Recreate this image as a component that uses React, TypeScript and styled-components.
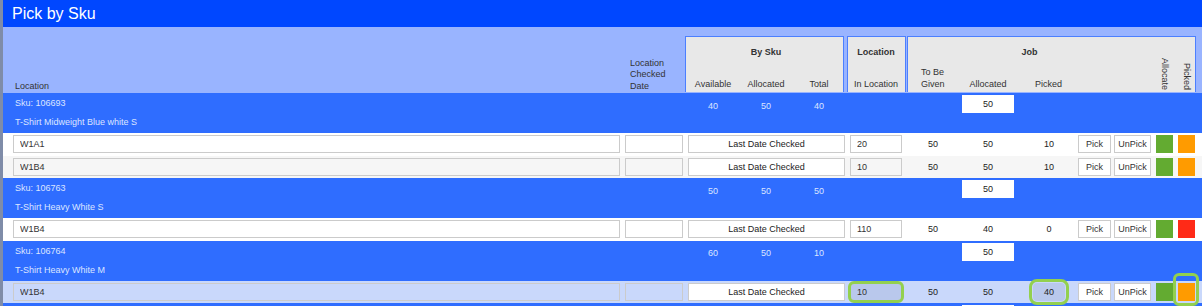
import React from 'react';
import styled, { createGlobalStyle, css } from 'styled-components';

const GlobalStyle = createGlobalStyle`
  html, body {
    margin: 0;
    padding: 0;
    background: #ffffff;
    overflow: hidden;
  }
  body {
    font-family: "Liberation Sans", Arial, Helvetica, sans-serif;
    font-size: 9px;
    color: #333333;
  }
`;

const COLUMNS = '619px 64px 54px 52px 54px 60px 54px 56px 60px 36px 41px 22px 22px 1fr';

type Status = 'green' | 'orange' | 'red';

interface PickRow {
  location: string;
  inLocation: number;
  toBeGiven: number;
  allocated: number;
  picked: number;
  allocate: Status;
  pickedStatus: Status;
  selected?: boolean;
}

interface SkuGroup {
  sku: string;
  name: string;
  available: number;
  allocated: number;
  total: number;
  jobAllocated: number;
  rows: PickRow[];
}

const skus: SkuGroup[] = [
  {
    sku: '106693',
    name: 'T-Shirt Midweight Blue white S',
    available: 40,
    allocated: 50,
    total: 40,
    jobAllocated: 50,
    rows: [
      { location: 'W1A1', inLocation: 20, toBeGiven: 50, allocated: 50, picked: 10, allocate: 'green', pickedStatus: 'orange' },
      { location: 'W1B4', inLocation: 10, toBeGiven: 50, allocated: 50, picked: 10, allocate: 'green', pickedStatus: 'orange' }
    ]
  },
  {
    sku: '106763',
    name: 'T-Shirt Heavy White S',
    available: 50,
    allocated: 50,
    total: 50,
    jobAllocated: 50,
    rows: [
      { location: 'W1B4', inLocation: 110, toBeGiven: 50, allocated: 40, picked: 0, allocate: 'green', pickedStatus: 'red' }
    ]
  },
  {
    sku: '106764',
    name: 'T-Shirt Heavy White M',
    available: 60,
    allocated: 50,
    total: 10,
    jobAllocated: 50,
    rows: [
      { location: 'W1B4', inLocation: 10, toBeGiven: 50, allocated: 50, picked: 40, allocate: 'green', pickedStatus: 'orange', selected: true }
    ]
  }
];

const statusColors: Record<Status, string> = {
  green: '#63ab31',
  orange: '#ff9b00',
  red: '#ff2a17'
};

const Frame = styled.div`
  border-left: 3px solid #7f8ca8;
  height: 306px;
  overflow: hidden;
`;

const TitleBar = styled.div`
  height: 27px;
  background: #0047ff;
  color: #ffffff;
  font-size: 16px;
  line-height: 28px;
  padding-left: 9px;
`;

const Header = styled.div`
  display: grid;
  grid-template-columns: ${COLUMNS};
  grid-template-rows: 9px 30px 26px 1px;
  background: #99b4ff;
`;

const HeadLabel = styled.div<{ $col: string; $left?: number }>`
  grid-column: ${p => p.$col};
  grid-row: 1 / 4;
  align-self: end;
  padding-left: ${p => p.$left ?? 0}px;
  padding-bottom: 0;
  line-height: 11.5px;
  color: #333333;
`;

const GroupBox = styled.div<{ $col: string; $ml: number; $mr: number }>`
  grid-column: ${p => p.$col};
  grid-row: 2 / 4;
  margin-left: ${p => p.$ml}px;
  margin-right: ${p => p.$mr}px;
  background: #e8e8e8;
  border: 1px solid #4c7fff;
  border-bottom: none;
`;

const GroupTitle = styled.div<{ $col: string }>`
  grid-column: ${p => p.$col};
  grid-row: 2;
  align-self: center;
  text-align: center;
  font-weight: bold;
  color: #333333;
  padding-top: 1px;
`;

const SubLabel = styled.div<{ $col: string; $left?: number }>`
  grid-column: ${p => p.$col};
  grid-row: 3;
  align-self: end;
  text-align: ${p => (p.$left !== undefined ? 'left' : 'center')};
  padding-left: ${p => p.$left ?? 0}px;
  padding-bottom: 2px;
  line-height: 12px;
  color: #333333;
`;

const RotatedLabel = styled.div<{ $col: string }>`
  grid-column: ${p => p.$col};
  grid-row: 2 / 4;
  align-self: end;
  justify-self: center;
  writing-mode: vertical-rl;
  padding-bottom: 2px;
  color: #333333;
  line-height: 11px;
`;

const SkuRow = styled.div`
  display: grid;
  grid-template-columns: ${COLUMNS};
  grid-template-rows: 20px 20px;
  background: #2f6dff;
  color: #dce5ff;
`;

const SkuText = styled.div<{ $row: number }>`
  grid-column: 1;
  grid-row: ${p => p.$row};
  padding-left: 12px;
  align-self: center;
  padding-bottom: ${p => (p.$row === 2 ? 2 : 0)}px;
`;

const SkuNumber = styled.div<{ $col: number }>`
  grid-column: ${p => p.$col};
  grid-row: 1;
  text-align: center;
  align-self: center;
  padding-top: 5px;
`;

const AllocBox = styled.input`
  grid-column: 8;
  grid-row: 1;
  justify-self: center;
  align-self: start;
  margin-top: 2px;
  width: 52px;
  height: 18px;
  box-sizing: border-box;
  border: none;
  background: #ffffff;
  font: inherit;
  color: #222222;
  text-align: center;
  padding: 0;
  outline: none;
`;

const ItemRow = styled.div<{ $variant: 'white' | 'alt' | 'selected' }>`
  display: grid;
  grid-template-columns: ${COLUMNS};
  height: 22.5px;
  align-items: center;
  background: ${p => (p.$variant === 'selected' ? '#c9d8fb' : p.$variant === 'alt' ? '#f6f6f6' : '#ffffff')};
`;

const fieldBase = css`
  height: 18px;
  box-sizing: border-box;
  border: 1px solid #cbcbcb;
  font: inherit;
  color: #333333;
  padding: 0 0 0 6px;
  outline: none;
`;

const TextField = styled.input<{ $col: number; $ml: number; $mr: number; $tint?: string; $ring?: boolean }>`
  ${fieldBase};
  grid-column: ${p => p.$col};
  margin-left: ${p => p.$ml}px;
  margin-right: ${p => p.$mr}px;
  width: calc(100% - ${p => p.$ml + p.$mr}px);
  background: ${p => p.$tint ?? 'transparent'};
  ${p =>
    p.$ring &&
    css`
      outline: 3px solid #93d04f;
      outline-offset: -1px;
      border-radius: 4px;
    `}
`;

const LastDateButton = styled.button`
  ${fieldBase};
  grid-column: 3 / 6;
  margin: 0 1px 0 2px;
  background: #ffffff;
  padding: 0;
  color: #222222;
  text-align: center;
`;

const Num = styled.div<{ $col: number }>`
  grid-column: ${p => p.$col};
  text-align: center;
  color: #222222;
`;

const PickedValue = styled.div<{ $ring?: boolean }>`
  grid-column: 9;
  justify-self: center;
  margin-left: 6px;
  width: 32px;
  height: 18px;
  line-height: 18px;
  text-align: center;
  color: #222222;
  ${p =>
    p.$ring &&
    css`
      background: #b9c8ec;
      outline: 3px solid #93d04f;
      outline-offset: 1px;
      border-radius: 4px;
    `}
`;

const ActionButton = styled.button<{ $col: number; $w: number }>`
  ${fieldBase};
  grid-column: ${p => p.$col};
  width: ${p => p.$w}px;
  margin-left: 2px;
  background: #ffffff;
  padding: 0;
  color: #333333;
  text-align: center;
`;

const Swatch = styled.div<{ $col: number; $color: string; $ring?: boolean }>`
  grid-column: ${p => p.$col};
  width: 17px;
  height: 18px;
  margin-left: 3px;
  background: ${p => p.$color};
  position: relative;
  ${p =>
    p.$ring &&
    css`
      &::after {
        content: '';
        position: absolute;
        top: -10px;
        left: -5px;
        right: -4px;
        bottom: -5px;
        border: 3px solid #93d04f;
        border-radius: 6px;
      }
    `}
`;

// next sku group, only its top edge is on screen
const BlankBox = styled.div`
  grid-column: 8;
  grid-row: 1;
  justify-self: center;
  margin-top: 2px;
  width: 52px;
  height: 18px;
  background: #ffffff;
`;

const PickByRow: React.FC<{ row: PickRow; variant: 'white' | 'alt' | 'selected' }> = ({ row, variant }) => {
  const sel = !!row.selected;
  return (
    <ItemRow $variant={variant}>
      <TextField $col={1} $ml={10} $mr={2} value={row.location} readOnly />
      <TextField $col={2} $ml={3} $mr={3} value="" readOnly />
      <LastDateButton>Last Date Checked</LastDateButton>
      <TextField
        $col={6}
        $ml={4}
        $mr={4}
        value={row.inLocation}
        readOnly
        $tint={sel ? '#b9c8ec' : undefined}
        $ring={sel}
      />
      <Num $col={7}>{row.toBeGiven}</Num>
      <Num $col={8}>{row.allocated}</Num>
      <PickedValue $ring={sel}>{row.picked}</PickedValue>
      <ActionButton $col={10} $w={33}>Pick</ActionButton>
      <ActionButton $col={11} $w={37}>UnPick</ActionButton>
      <Swatch $col={12} $color={statusColors[row.allocate]} />
      <Swatch $col={13} $color={statusColors[row.pickedStatus]} $ring={sel} />
    </ItemRow>
  );
};

export default function App() {
  return (
    <>
      <GlobalStyle />
      <Frame>
        <TitleBar>Pick by Sku</TitleBar>
        <Header>
          <HeadLabel $col="1" $left={12}>Location</HeadLabel>
          <HeadLabel $col="2" $left={8}>
            Location
            <br />
            Checked
            <br />
            Date
          </HeadLabel>

          <GroupBox $col="3 / 6" $ml={-1} $mr={2} />
          <GroupTitle $col="3 / 6">By Sku</GroupTitle>
          <SubLabel $col="3">Available</SubLabel>
          <SubLabel $col="4">Allocated</SubLabel>
          <SubLabel $col="5">Total</SubLabel>

          <GroupBox $col="6" $ml={1} $mr={0} />
          <GroupTitle $col="6">Location</GroupTitle>
          <SubLabel $col="6">In Location</SubLabel>

          <GroupBox $col="7 / 14" $ml={1} $mr={1} />
          <GroupTitle $col="7 / 12">Job</GroupTitle>
          <SubLabel $col="7" $left={15}>
            To Be
            <br />
            Given
          </SubLabel>
          <SubLabel $col="8">Allocated</SubLabel>
          <SubLabel $col="9" $left={19}>Picked</SubLabel>
          <RotatedLabel $col="12">Allocate</RotatedLabel>
          <RotatedLabel $col="13">Picked</RotatedLabel>
        </Header>

        {skus.map(group => (
          <React.Fragment key={group.sku}>
            <SkuRow>
              <SkuText $row={1}>Sku: {group.sku}</SkuText>
              <SkuText $row={2}>{group.name}</SkuText>
              <SkuNumber $col={3}>{group.available}</SkuNumber>
              <SkuNumber $col={4}>{group.allocated}</SkuNumber>
              <SkuNumber $col={5}>{group.total}</SkuNumber>
              <AllocBox value={group.jobAllocated} readOnly />
            </SkuRow>
            {group.rows.map((row, i) => (
              <PickByRow
                key={group.sku + i}
                row={row}
                variant={row.selected ? 'selected' : i % 2 === 1 ? 'alt' : 'white'}
              />
            ))}
          </React.Fragment>
        ))}
        <SkuRow>
          <BlankBox />
        </SkuRow>
      </Frame>
    </>
  );
}
